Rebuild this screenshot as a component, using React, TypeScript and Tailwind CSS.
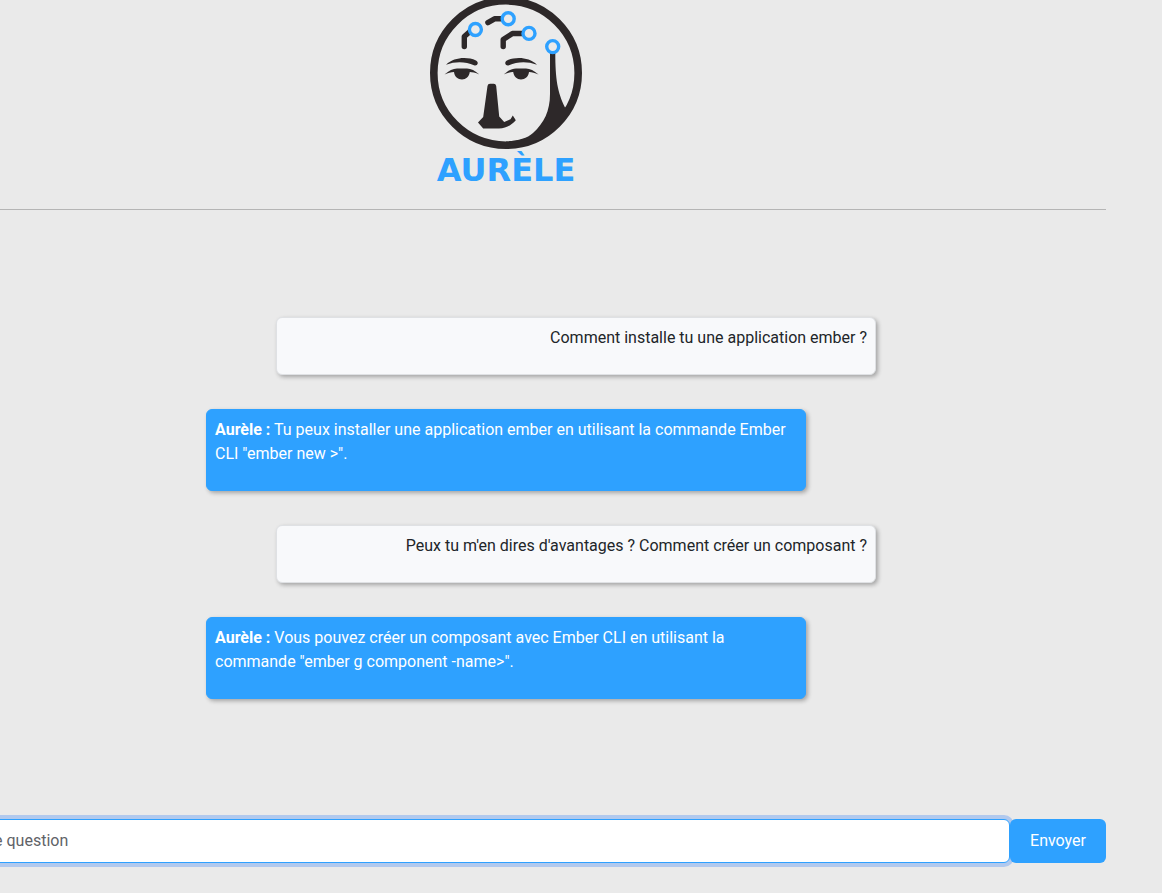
const messages = [
  { author: 'user', text: 'Comment installe tu une application ember ?' },
  {
    author: 'bot',
    text: 'Tu peux installer une application ember en utilisant la commande Ember CLI "ember new >".',
  },
  { author: 'user', text: "Peux tu m'en dires d'avantages ? Comment créer un composant ?" },
  {
    author: 'bot',
    text: 'Vous pouvez créer un composant avec Ember CLI en utilisant la commande "ember g component -name>".',
  },
];

function Eye() {
  return (
    <>
      <path d="M446 64.8C454 57 467 56.6 476 60.4C479.4 62.3 477.4 66.4 474 65.2C466 61.8 456 61 446 64.8Z" />
      <path d="M444.5 74.6C449 70.4 453 68.4 457 68.4H467C471 68.4 475 70.4 479.3 74.6C475.5 72.8 472 72.2 469.8 72.1C469 76.8 466 79.6 462 79.6C457.8 79.6 454.6 76.8 454 72.1C451 72.2 448 73 444.5 74.6Z" />
    </>
  );
}

function Logo() {
  return (
    <svg viewBox="430 -3 152 152" className="block h-[152px] w-[152px]" fill="#2d2829" aria-hidden="true">
      <circle cx="506" cy="73" r="72.2" fill="none" stroke="#2d2829" strokeWidth="7.6" />
      <g fill="none" stroke="#2d2829" strokeWidth="5.4" strokeLinecap="round" strokeLinejoin="round">
        <path d="M464.3 46.6V36.5L470 31.5" />
        <path d="M487.9 22.6L494.5 18.8H501" />
        <path d="M503.2 46.6V39.5L512.5 33.5H522" />
      </g>
      <Eye />
      <g transform="matrix(-1 0 0 1 983 0)">
        <Eye />
      </g>
      <path d="M490 83.7H493.7Q495.8 83.7 496.2 86L499.2 116.5L504.2 122L510.5 119.2L512.8 115.5L515.8 120.2C511 125.5 506 128.4 499 128.4H483.2L478 122.4L483.2 117L487.5 86Q487.8 83.7 490 83.7Z" />
      <path d="M550 53H555.3C555.3 79 557.5 92 565 107.4L570 109C557 134 534 147 506 147V141.5C517 141 527 138.5 533 133C544 123 550 111 550 94Z" />
      <g fill="#eaeaea" stroke="#2ea1ff" strokeWidth="3.4">
        <circle cx="475.4" cy="29.5" r="6" />
        <circle cx="508.2" cy="18.7" r="6" />
        <circle cx="529" cy="33.4" r="6" />
        <circle cx="552.7" cy="46.6" r="6" />
      </g>
    </svg>
  );
}

export default function App() {
  return (
    <div className="min-h-screen overflow-hidden bg-[#eaeaea] font-[Roboto,sans-serif] text-base text-[#212529]">
      <div className="-ml-[150px] flex min-h-screen flex-col px-14">
        <header className="-mt-[3px] flex h-[213px] flex-col items-center border-b border-[#b5b5b5]">
          <Logo />
          <h1 className="font-['DejaVu_Sans',sans-serif] text-[32px] leading-[42px] font-bold text-[#2ea1ff]">AURÈLE</h1>
        </header>

        <main className="mx-auto mt-[107px] flex w-[740px] flex-col gap-[34px]">
          {messages.map((message) =>
            message.author === 'user' ? (
              <div
                key={message.text}
                className="w-[600px] self-end rounded-md border border-[#dfe1e4] bg-[#f8f9fb] px-2 pt-2 pb-6 text-right shadow-[2px_2px_4px_rgba(0,0,0,0.3)]"
              >
                <p>{message.text}</p>
              </div>
            ) : (
              <div
                key={message.text}
                className="ml-[70px] w-[600px] rounded-md border border-[#2ea1ff] bg-[#2ea1ff] px-2 pt-2 pb-6 text-white shadow-[2px_2px_4px_rgba(0,0,0,0.3)]"
              >
                <p>
                  <strong className="font-bold">Aurèle :</strong> {message.text}
                </p>
              </div>
            ),
          )}
        </main>

        <form className="mt-auto mb-[30px] flex pt-10" onSubmit={(event) => event.preventDefault()}>
          <input
            type="text"
            aria-label="Posez votre question"
            placeholder="Posez votre question"
            className="h-11 min-w-0 flex-1 rounded-md border border-[#2ea1ff] bg-white px-3 pb-0.5 shadow-[0_0_0_4px_#b1c9ee] outline-none placeholder:text-[#5f6368]"
          />
          <button type="submit" className="relative h-11 rounded-md bg-[#2ea1ff] px-5 text-white">
            Envoyer
          </button>
        </form>
      </div>
    </div>
  );
}
